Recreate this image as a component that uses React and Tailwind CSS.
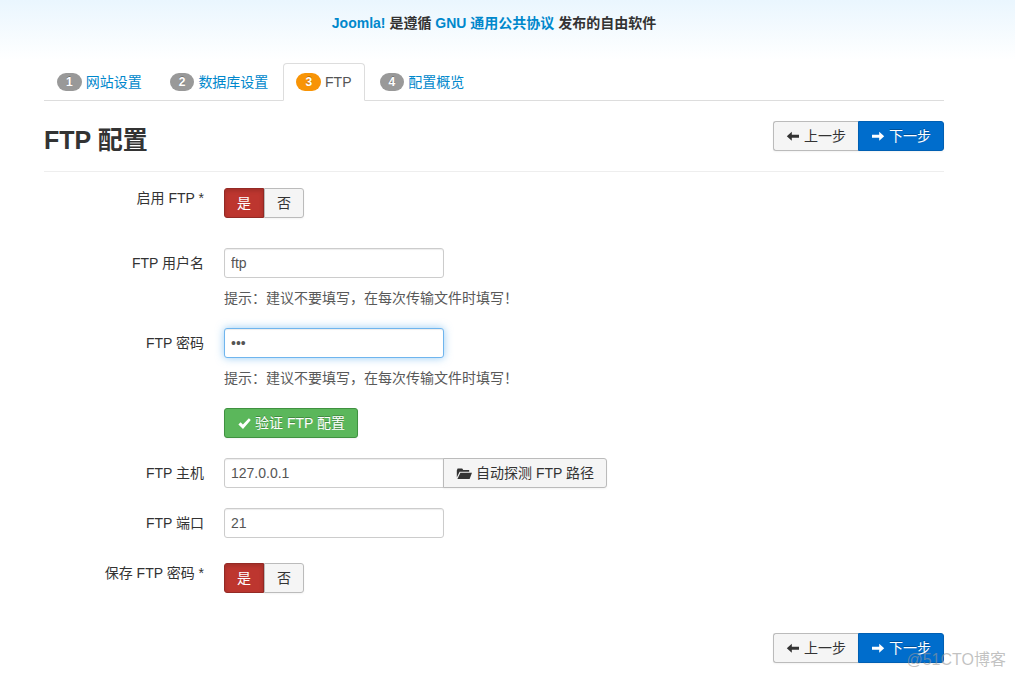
import React from "react";

const icon = "h-[14px] w-[14px] shrink-0 fill-current";

function ArrowLeft() {
  return (
    <svg viewBox="0 0 14 14" className={icon} aria-hidden="true">
      <path d="M0.8 7.2 5.8 2.7V5.7H13V8.7H5.8V11.7Z" />
    </svg>
  );
}

function ArrowRight() {
  return (
    <svg viewBox="0 0 14 14" className={icon} aria-hidden="true">
      <path d="M13.2 7.2 8.2 2.7V5.7H1V8.7H8.2V11.7Z" />
    </svg>
  );
}

function Check() {
  return (
    <svg viewBox="0 0 14 14" className={icon} aria-hidden="true">
      <path d="M11.9 2.2 13.8 4 6 12.9 1.4 8.6 3.6 6.3 5.9 8.5Z" />
    </svg>
  );
}

function FolderOpen() {
  return (
    <svg viewBox="0 0 16 14" className="h-[14px] w-4 shrink-0 fill-current" aria-hidden="true">
      <path d="M1.6 2.6H6.2L7.2 4H13.2V5.8H3.6L0.8 11.6V4.4Z" />
      <path d="M4.4 6.7H16L13.6 12.9H1.4Z" />
    </svg>
  );
}

const btn =
  "inline-flex h-[30px] items-center border text-sm leading-5 whitespace-nowrap shadow-[0_1px_2px_rgba(0,0,0,0.05)]";
const plain = "border-[#bbb] bg-[#f5f5f5] text-[#333]";

function StepButtons() {
  return (
    <div className="flex shrink-0">
      <button type="button" className={`${btn} ${plain} gap-1 rounded-l-[3px] border-r-0 px-3`}>
        <ArrowLeft />
        上一步
      </button>
      <button
        type="button"
        className={`${btn} gap-1 rounded-r-[3px] border-[#005fb3] bg-[#006dcc] px-3 text-white [text-shadow:0_-1px_0_rgba(0,0,0,0.25)]`}
      >
        <ArrowRight />
        下一步
      </button>
    </div>
  );
}

function YesNo({ name, label }) {
  return (
    <div role="radiogroup" aria-label={label} className="flex">
      <label
        className={`${btn} relative cursor-pointer rounded-l-[3px] border-[#942a25] bg-[#bd362f] px-3 text-white shadow-[inset_0_2px_4px_rgba(0,0,0,0.15)]`}
      >
        <input type="radio" name={name} value="1" defaultChecked className="sr-only" />是
      </label>
      <label className={`${btn} ${plain} relative cursor-pointer rounded-r-[3px] px-3`}>
        <input type="radio" name={name} value="0" className="sr-only" />否
      </label>
    </div>
  );
}

const field =
  "h-[30px] w-[220px] border border-[#ccc] bg-white px-[6px] text-sm leading-5 text-[#555] shadow-[inset_0_1px_1px_rgba(0,0,0,0.075)] outline-none";

function Row({ label, id, toggle, children }) {
  const cls = `w-40 shrink-0 text-right ${toggle ? "" : "pt-[5px]"}`;
  return (
    <div className="flex gap-5">
      {id ? (
        <label htmlFor={id} className={cls}>
          {label}
        </label>
      ) : (
        <span className={cls}>{label}</span>
      )}
      <div className="min-w-0">{children}</div>
    </div>
  );
}

const steps = ["网站设置", "数据库设置", "FTP", "配置概览"];

function Tabs() {
  return (
    <nav className="flex border-b border-[#ddd]">
      {steps.map((name, i) => {
        const active = name === "FTP";
        return (
          <a
            key={name}
            href="#"
            aria-current={active ? "step" : undefined}
            className={`mr-[2px] -mb-px flex h-[38px] items-center gap-1 rounded-t-[4px] border px-3 ${
              active
                ? "border-[#ddd] border-b-white bg-white text-[#555]"
                : "border-transparent text-[#08c]"
            }`}
          >
            <span
              className={`rounded-[9px] px-[9px] py-[2px] text-xs leading-[14px] font-bold text-white [text-shadow:0_-1px_0_rgba(0,0,0,0.25)] ${
                active ? "bg-[#f89406]" : "bg-[#999]"
              }`}
            >
              {i + 1}
            </span>
            {name}
          </a>
        );
      })}
    </nav>
  );
}

const hint = "提示：建议不要填写，在每次传输文件时填写！";

export default function App() {
  return (
    <div className="relative bg-white bg-[linear-gradient(#eaf6fe,#ffffff)] bg-[length:100%_60px] bg-no-repeat pr-[27px] pb-[15px] font-['Liberation_Sans','Noto_Sans_CJK_SC',sans-serif] text-sm leading-5 text-[#333]">
      <div className="mx-auto w-full max-w-[900px]">
        <header className="pt-[13px] text-center font-bold">
          <a href="#" className="text-[#08c]">Joomla!</a> 是遵循{" "}
          <a href="#" className="text-[#08c]">GNU 通用公共协议</a> 发布的自由软件
        </header>
        <main className="pt-[30px]">
          <Tabs />
          <form onSubmit={(e) => e.preventDefault()}>
            <div className="mt-5 flex items-start justify-between border-b border-[#eee] pb-5">
              <h1 className="text-[25px] leading-[38px] font-bold -mb-2">FTP 配置</h1>
              <StepButtons />
            </div>
            <div className="mt-4 flex flex-col">
              <Row label="启用 FTP *" toggle>
                <YesNo name="enable" label="启用 FTP" />
              </Row>
              <div className="mt-[30px] flex flex-col gap-5">
                <Row label="FTP 用户名" id="user">
                  <input id="user" type="text" defaultValue="ftp" className={`${field} rounded-[3px]`} />
                  <p className="mt-[10px] text-[#595959]">{hint}</p>
                </Row>
                <Row label="FTP 密码" id="pass">
                  <input
                    id="pass"
                    type="password"
                    defaultValue="ftp"
                    className="h-[30px] w-[220px] rounded-[3px] border border-[#6fb5ee] bg-white px-[6px] text-sm leading-5 text-[#555] shadow-[inset_0_1px_1px_rgba(0,0,0,0.075),0_0_8px_rgba(82,168,236,0.6)] outline-none"
                  />
                  <p className="mt-[10px] text-[#595959]">{hint}</p>
                </Row>
                <Row label="">
                  <button
                    type="button"
                    className={`${btn} gap-1 rounded-[3px] border-[#3f9140] bg-[#5bb75b] px-3 text-white [text-shadow:0_-1px_0_rgba(0,0,0,0.25)]`}
                  >
                    <Check />
                    验证 FTP 配置
                  </button>
                </Row>
                <Row label="FTP 主机" id="host">
                  <div className="flex">
                    <input id="host" type="text" defaultValue="127.0.0.1" className={`${field} rounded-l-[3px]`} />
                    <button type="button" className={`${btn} ${plain} -ml-px gap-1 rounded-r-[3px] px-3`}>
                      <FolderOpen />
                      自动探测 FTP 路径
                    </button>
                  </div>
                </Row>
                <Row label="FTP 端口" id="port">
                  <input id="port" type="text" defaultValue="21" className={`${field} rounded-[3px]`} />
                </Row>
              </div>
              <div className="mt-[25px]">
                <Row label="保存 FTP 密码 *" toggle>
                  <YesNo name="save" label="保存 FTP 密码" />
                </Row>
              </div>
            </div>
            <div className="mt-10 flex justify-end">
              <StepButtons />
            </div>
          </form>
        </main>
      </div>
      <div className="pointer-events-none absolute right-[9px] bottom-[6px] text-base leading-6 text-[#999]/60">
        @51CTO博客
      </div>
    </div>
  );
}
